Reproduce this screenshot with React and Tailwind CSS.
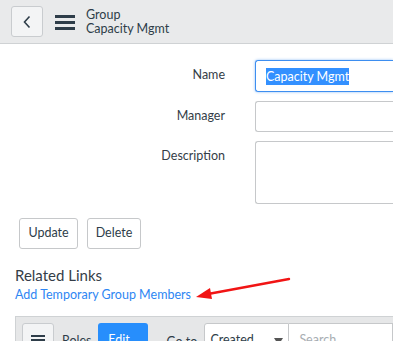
export default function App() {
  const font = { fontFamily: "Lato, 'Open Sans', sans-serif" };
  return (
    <div className="w-[393px] h-[341px] overflow-hidden bg-white relative" style={font}>
      {/* Header */}
      <div className="h-[44px] bg-[#e9eaeb] border-b border-[#cfd2d4] flex items-center pl-[11px]">
        <button className="w-[32px] h-[31px] rounded-[3px] border border-[#c9cccf] bg-[#f3f4f5] flex items-center justify-center">
          <svg width="10" height="14" viewBox="0 0 10 14">
            <path d="M7.5 1.5 L2.5 7 L7.5 12.5" fill="none" stroke="#2e3d49" strokeWidth="1.6" />
          </svg>
        </button>
        <svg className="ml-[12px]" width="20" height="16" viewBox="0 0 20 16">
          <rect x="0" y="1" width="20" height="3" fill="#2e3d49" />
          <rect x="0" y="7" width="20" height="3" fill="#2e3d49" />
          <rect x="0" y="13" width="20" height="3" fill="#2e3d49" />
        </svg>
        <div className="ml-[11px] flex flex-col leading-[14px] text-[12.5px] text-[#2e3d49] mt-[1px]">
          <span>Group</span>
          <span>Capacity Mgmt</span>
        </div>
      </div>

      {/* Form */}
      <div className="grid grid-cols-[225px_1fr] gap-x-[30px] gap-y-[9px] mt-[16px] text-[12.5px] text-[#343d47]">
        <div className="text-right h-[31px] flex items-center justify-end">Name</div>
        <div className="h-[32px] border border-[#3d8ef0] rounded-l-[3px] border-r-0 shadow-[0_0_3px_#8fbdf5] flex items-center pl-[10px]">
          <span className="bg-[#3390ff] text-white leading-[17px]">Capacity Mgmt</span>
        </div>
        <div className="text-right h-[31px] flex items-center justify-end">Manager</div>
        <div className="h-[31px] border border-[#c6c8ca] rounded-l-[3px] border-r-0"></div>
        <div className="text-right h-[63px] flex items-start justify-end pt-[6px]">Description</div>
        <div className="h-[63px] border border-[#c6c8ca] rounded-l-[3px] border-r-0"></div>
      </div>

      {/* Buttons */}
      <div className="flex gap-[9px] ml-[19px] mt-[14px]">
        <button className="w-[59px] h-[31px] border border-[#c6c8ca] rounded-[3px] bg-white text-[12.5px] text-[#2e3d49]">Update</button>
        <button className="w-[54px] h-[31px] border border-[#c6c8ca] rounded-[3px] bg-white text-[12.5px] text-[#2e3d49]">Delete</button>
      </div>

      {/* Related Links */}
      <div className="ml-[15px] mt-[17px]">
        <div className="text-[15px] text-[#343d47] leading-[18px]">Related Links</div>
        <div className="text-[12.5px] text-[#2d86f3] leading-[18px] mt-[2px]">Add Temporary Group Members</div>
      </div>

      {/* Arrow */}
      <svg className="absolute left-[188px] top-[272px]" width="110" height="34" viewBox="0 0 110 34">
        <line x1="101" y1="7" x2="20" y2="22" stroke="#f11414" strokeWidth="2.4" strokeLinecap="round" />
        <polygon points="8,25 22,16 24,27" fill="#f11414" />
      </svg>

      {/* Bottom bar */}
      <div className="ml-[15px] mt-[12px] h-[40px] bg-[#e6e7e8] border-t border-l border-[#cfd2d4] flex items-start pt-[6px] pl-[6px]">
        <button className="w-[32px] h-[31px] rounded-[3px] border border-[#c9cccf] bg-[#f3f4f5] flex items-center justify-center">
          <svg width="14" height="12" viewBox="0 0 14 12">
            <rect x="0" y="2" width="14" height="2" fill="#2e3d49" />
            <rect x="0" y="6" width="14" height="2" fill="#2e3d49" />
          </svg>
        </button>
        <span className="ml-[8px] text-[12.5px] text-[#2e3d49] mt-[9px]">Roles</span>
        <button className="ml-[7px] w-[50px] h-[31px] rounded-[3px] bg-[#278efc] text-white text-[12.5px] flex items-start justify-center pt-[8px]">Edit...</button>
        <span className="ml-[18px] text-[12.5px] text-[#2e3d49] mt-[10px]">Go to</span>
        <div className="ml-[7px] w-[85px] h-[32px] bg-white border border-[#c6c8ca] rounded-l-[3px] flex items-start pt-[7px] pl-[5px] text-[12.5px] text-[#2e3d49] relative">
          Created
          <svg className="absolute right-[5px] top-[14px]" width="9" height="7" viewBox="0 0 9 7">
            <polygon points="0,0 9,0 4.5,7" fill="#555" />
          </svg>
        </div>
        <div className="flex-1 h-[32px] bg-white border border-l-0 border-[#c6c8ca] pt-[7px] pl-[10px] text-[12.5px] text-[#a8aeb3]">Search</div>
      </div>
    </div>
  );
}
